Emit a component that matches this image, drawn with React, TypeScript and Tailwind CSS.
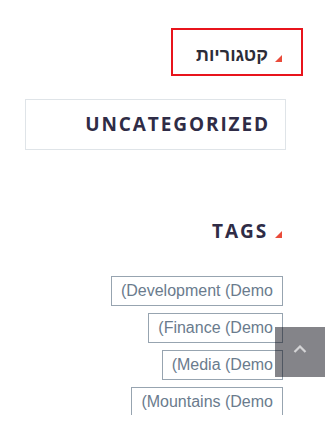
const tags = ["Development (Demo", "Finance (Demo", "Media (Demo", "Mountains (Demo"];

function Corner() {
  return (
    <svg width="7" height="7" viewBox="0 0 7 7" className="mb-[3px] shrink-0" aria-hidden>
      <polygon points="0,7 7,0 7,7" fill="#ea4b3a" />
    </svg>
  );
}

function WidgetTitle({ children, className }: { children: string; className: string }) {
  return (
    <div className="flex items-end justify-start gap-[7px] pr-[4px]">
      <Corner />
      <h3 className={className}>{children}</h3>
    </div>
  );
}

export default function App() {
  return (
    <div dir="rtl" className="relative h-[445px] w-[335px] overflow-hidden bg-white">
      <div className="mr-[49px] ml-[25px] pt-[45px]">
        {/* categories */}
        <WidgetTitle className="text-[18px] leading-[20px] font-bold text-[#2c2c38] [font-family:'Liberation_Sans',sans-serif]">
          קטגוריות
        </WidgetTitle>
        <div className="mt-[34px] flex h-[51px] items-center border border-[#dfe4e8] pr-[15px]">
          <span className="text-[19px] font-bold tracking-[1.9px] text-[#2f2c46] [font-family:'Open_Sans',sans-serif]">
            UNCATEGORIZED
          </span>
        </div>

        {/* tags */}
        <div className="mt-[71px]">
          <WidgetTitle className="text-[19px] leading-[20px] font-bold tracking-[1.9px] text-[#2f2c46] [font-family:'Open_Sans',sans-serif]">
            TAGS
          </WidgetTitle>
        </div>
        <div className="mt-[35px] flex h-[139px] flex-col items-start gap-[7px] overflow-hidden pr-[3px]">
          {tags.map((t) => (
            <a
              key={t}
              className="flex h-[30px] shrink-0 items-center border border-[#97a4b0] px-[9px] text-[16px] text-[#6a7b8d] [font-family:'Liberation_Sans',sans-serif]"
            >
              <span>
                {t}
                <bdi dir="rtl">)</bdi>
              </span>
            </a>
          ))}
        </div>
      </div>

      {/* debug highlight */}
      <div className="pointer-events-none absolute top-[28px] left-[171px] h-[48px] w-[132px] border-2 border-[#e8141c]" />

      {/* scroll to top */}
      <button className="absolute top-[327px] left-[275px] flex h-[50px] w-[50px] items-start justify-center bg-[rgba(10,10,20,0.5)] pt-[18px]">
        <svg width="14" height="8" viewBox="0 0 14 8" fill="none" aria-hidden>
          <polyline points="1.5,7 7,1.5 12.5,7" stroke="#d4d4d6" strokeWidth="2.2" />
        </svg>
      </button>
    </div>
  );
}
